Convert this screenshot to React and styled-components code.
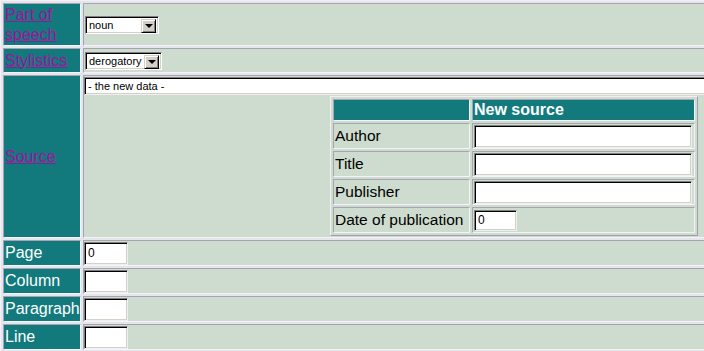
import React from 'react';
import styled, { createGlobalStyle } from 'styled-components';

const TEAL = '#127a7c';
const PALE = '#cddcce';

const GlobalStyle = createGlobalStyle`
  html, body {
    margin: 0;
    padding: 0;
    overflow: hidden;
    background: ${PALE};
  }
  body {
    font-family: "Liberation Sans", Arial, sans-serif;
  }
`;

const FormTable = styled.table`
  width: 948px;
  border-collapse: separate;
  border-spacing: 2px;
  border: 1px solid;
  border-color: #f2f2f6 #9a98a4 #9a98a4 #f2f2f6;
  background: #e6e4ec;
`;

const Row = styled.tr`
  height: ${(p) => p.$h}px;
`;

const Cell = styled.td`
  box-sizing: border-box;
  border: 1px solid;
  border-color: #a6a4b0 #f4f4f6 #f4f4f6 #a6a4b0;
  padding: 0;
  vertical-align: middle;
  background: ${(p) => (p.$dark ? TEAL : PALE)};
`;

const LabelCell = styled(Cell)`
  width: 78px;
  padding-left: 1px;
  font-size: 16px;
  line-height: 20px;
`;

const FieldLink = styled.a`
  color: #a4109f;
  text-decoration: underline;
  cursor: pointer;
`;

const FieldLabel = styled.span`
  color: #ffffff;
`;

const TextInput = styled.input`
  display: block;
  box-sizing: border-box;
  width: ${(p) => p.$w}px;
  height: ${(p) => p.$h}px;
  margin: 0;
  padding: 0 0 0 3px;
  border: 1px solid;
  border-color: #808080 #f0f0f0 #f0f0f0 #808080;
  box-shadow: inset 1px 1px 0 #000, inset -1px -1px 0 #d4d0c8;
  background: #fff;
  color: #000;
  font-family: "Liberation Sans", Arial, sans-serif;
  font-size: ${(p) => p.$fs || 12}px;
  outline: none;
`;

const SelectBox = styled.div`
  display: flex;
  box-sizing: border-box;
  width: ${(p) => p.$w}px;
  height: 18px;
  margin-left: 1px;
  padding: 2px;
  border: 1px solid;
  border-color: #808080 #ffffff #ffffff #808080;
  box-shadow: inset 1px 1px 0 #000, inset -1px -1px 0 #d4d0c8;
  background: #fff;
  font-size: 11px;
  line-height: 14px;
  color: #000;
`;

const SelectText = styled.span`
  flex: 1;
  display: flex;
  align-items: center;
  padding-left: 1px;
`;

const ArrowButton = styled.span`
  box-sizing: border-box;
  width: 15px;
  height: 14px;
  display: flex;
  align-items: center;
  justify-content: center;
  background: #d4d0c8;
  border: 1px solid;
  border-color: #d4d0c8 #000 #000 #d4d0c8;
  box-shadow: inset 1px 1px 0 #fff, inset -1px -1px 0 #808080;

  &::after {
    content: '';
    border-left: 4px solid transparent;
    border-right: 4px solid transparent;
    border-top: 4px solid #000;
    margin-top: 1px;
  }
`;

const SourceTable = styled.table`
  margin: 1px auto 0;
  border-collapse: separate;
  border-spacing: 2px;
  border: 1px solid;
  border-color: #f0f0f4 #a09eaa #a09eaa #f0f0f4;
`;

const InnerRow = styled.tr`
  height: ${(p) => p.$h}px;
`;

const InnerCell = styled(Cell)`
  width: ${(p) => p.$w}px;
  padding-left: 1px;
  font-size: 15.5px;
  color: #000;
`;

const HeadTitle = styled.span`
  color: #fff;
  font-weight: bold;
  font-size: 16px;
`;

function Select({ value, width }) {
  return (
    <SelectBox $w={width}>
      <SelectText>{value}</SelectText>
      <ArrowButton />
    </SelectBox>
  );
}

const sourceFields = [
  { label: 'Author', w: 218 },
  { label: 'Title', w: 218 },
  { label: 'Publisher', w: 218 },
  { label: 'Date of publication', w: 43, h: 21, value: '0' },
];

const locationFields = [
  { label: 'Page', value: '0' },
  { label: 'Column' },
  { label: 'Paragraph' },
  { label: 'Line' },
];

export default function App() {
  return (
    <>
      <GlobalStyle />
      <FormTable>
        <tbody>
          <Row $h={43}>
            <LabelCell $dark>
              <FieldLink>Part of speech</FieldLink>
            </LabelCell>
            <Cell>
              <Select value="noun" width={74} />
            </Cell>
          </Row>
          <Row $h={25}>
            <LabelCell $dark>
              <FieldLink>Stylistics</FieldLink>
            </LabelCell>
            <Cell>
              <Select value="derogatory" width={77} />
            </Cell>
          </Row>
          <Row $h={163}>
            <LabelCell $dark>
              <FieldLink>Source</FieldLink>
            </LabelCell>
            <Cell>
              <TextInput $w={860} $h={18} $fs={11} defaultValue="- the new data -" />
              <SourceTable>
                <tbody>
                  <InnerRow $h={22}>
                    <InnerCell $dark $w={137} />
                    <InnerCell $dark $w={223}>
                      <HeadTitle>New source</HeadTitle>
                    </InnerCell>
                  </InnerRow>
                  {sourceFields.map((f) => (
                    <InnerRow $h={26} key={f.label}>
                      <InnerCell $w={137}>{f.label}</InnerCell>
                      <InnerCell $w={223}>
                        <TextInput $w={f.w} $h={f.h || 23} defaultValue={f.value || ''} />
                      </InnerCell>
                    </InnerRow>
                  ))}
                </tbody>
              </SourceTable>
            </Cell>
          </Row>
          {locationFields.map((f) => (
            <Row $h={26} key={f.label}>
              <LabelCell $dark>
                <FieldLabel>{f.label}</FieldLabel>
              </LabelCell>
              <Cell>
                <TextInput $w={44} $h={23} defaultValue={f.value || ''} />
              </Cell>
            </Row>
          ))}
        </tbody>
      </FormTable>
    </>
  );
}
